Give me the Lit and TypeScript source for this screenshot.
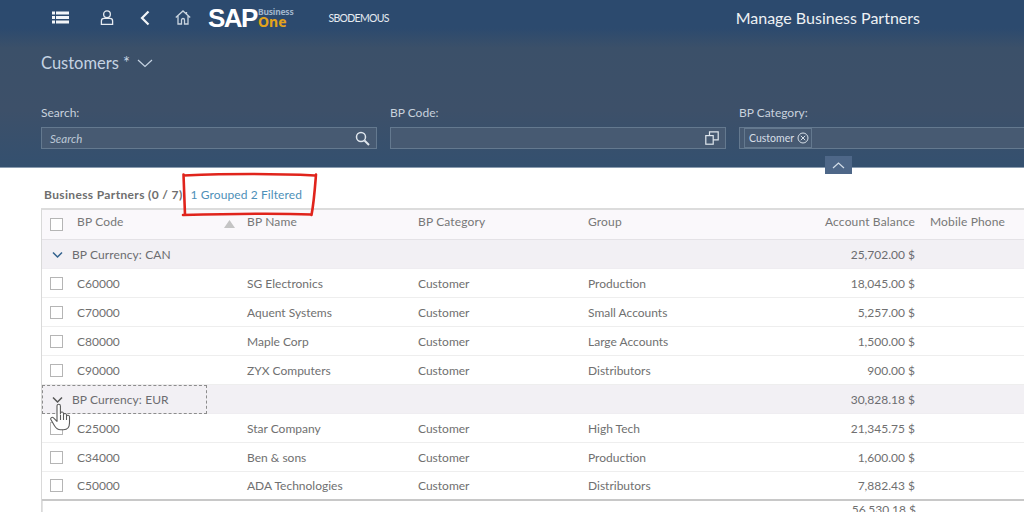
import { LitElement, html, css } from "lit";
import { customElement } from "lit/decorators.js";

type Row = { code: string; name: string; cat: string; group: string; bal: string };
const CAN: Row[] = [
  { code: "C60000", name: "SG Electronics", cat: "Customer", group: "Production", bal: "18,045.00 $" },
  { code: "C70000", name: "Aquent Systems", cat: "Customer", group: "Small Accounts", bal: "5,257.00 $" },
  { code: "C80000", name: "Maple Corp", cat: "Customer", group: "Large Accounts", bal: "1,500.00 $" },
  { code: "C90000", name: "ZYX Computers", cat: "Customer", group: "Distributors", bal: "900.00 $" },
];
const EUR: Row[] = [
  { code: "C25000", name: "Star Company", cat: "Customer", group: "High Tech", bal: "21,345.75 $" },
  { code: "C34000", name: "Ben & sons", cat: "Customer", group: "Production", bal: "1,600.00 $" },
  { code: "C50000", name: "ADA Technologies", cat: "Customer", group: "Distributors", bal: "7,882.43 $" },
];

@customElement("app-root")
export class AppRoot extends LitElement {
  static styles = css`
    :host { display: block; width: 1024px; height: 512px; overflow: hidden; position: relative; background: #fff; font-family: "Lato", "Noto Sans", sans-serif; color: #666; }
    .head { height: 168px; box-sizing: border-box; background: linear-gradient(#2c4a6e 0, #2c4a6e 28px, #3b5069 48px, #3d5069 110px, #34506f 166px); border-bottom: 1px solid #8a9cb0; position: relative; }
    .shell { height: 35px; display: flex; align-items: center; color: #eef2f6; }
    .ico { display: block; flex: none; }
    .i1 { margin-left: 52px; }
    .i2 { margin-left: 31px; }
    .i3 { margin-left: 26px; }
    .i4 { margin-left: 25px; }
    .logo { margin-left: 17px; display: flex; align-items: center; }
    .sap { font: 700 26px/1 "Liberation Sans", sans-serif; letter-spacing: -1.5px; color: #fff; }
    .lstack { display: flex; flex-direction: column; margin-left: 1px; margin-top: -2px; }
    .bus { font: 700 8.5px/9px "Noto Sans", sans-serif; color: #9fb4cb; letter-spacing: -0.2px; }
    .one { font: 700 14px/11px "Noto Sans", sans-serif; color: #e3a31b; }
    .tenant { margin-left: 35px; font-size: 10.5px; letter-spacing: -0.7px; color: #e6ebf1; }
    .title { margin-left: auto; margin-right: 104px; font-size: 16px; color: #eef1f4; }
    .variant { display: flex; align-items: center; gap: 7px; margin: 17px 0 0 41px; font-size: 16.5px; line-height: 22px; color: #c5d3e2; }
    .filters { display: grid; grid-template-columns: 336px 336px 336px; column-gap: 13px; margin: 31px 0 0 41px; }
    .lbl { font-size: 12px; line-height: 16px; color: #c8d2dd; margin-bottom: 6px; }
    .field { height: 22px; box-sizing: border-box; border: 1px solid #64798f; background: #475a72; display: flex; align-items: center; padding: 0 6px 0 8px; justify-content: space-between; }
    .ph { font-size: 11.5px; font-style: italic; color: #bcc8d6; }
    .token { display: flex; align-items: center; gap: 3px; height: 18px; border: 1px solid #64798f; margin-left: -4px; padding: 0 2px 0 4px; font-size: 10.5px; color: #d6dee7; }
    .collapse { position: absolute; left: 825px; top: 156px; width: 27px; height: 18px; background: #4e6788; display: flex; align-items: center; justify-content: center; }
    .bar { height: 40px; box-sizing: border-box; padding: 18px 0 0 44px; display: flex; gap: 8px; font-size: 12px; line-height: 17px; }
    .count { font-weight: 700; color: #6e6e6e; letter-spacing: 0.36px; }
    .link { color: #4d8fb8; letter-spacing: 0.1px; }
    .table { margin-left: 41px; border-left: 1px solid #d9d9d9; border-top: 2px solid #dcdcdc; }
    .row { display: grid; grid-template-columns: 35px 170px 171px 170px 170px 157px 15px 1fr; align-items: center; height: 29px; box-sizing: border-box; border-bottom: 1px solid #eeeeee; font-size: 12px; color: #707070; background: #fff; }
    .hdr { height: 30px; background: #faf8fb; color: #777; border-bottom: 1px solid #e4e2e6; padding-bottom: 6px; letter-spacing: 0.15px; }
    .hdr .cb { margin-top: 5px; }
    .grp { background: #f2f0f4; border-bottom: 1px solid #efedf1; color: #6c6c70; }
    .grp .gl { grid-column: 1 / 6; display: flex; align-items: center; gap: 8px; padding-left: 9px; letter-spacing: 0.1px; }
    .right { text-align: right; }
    .cb { width: 13px; height: 13px; box-sizing: border-box; border: 1px solid #b5b5b5; background: #fff; margin-left: 8px; }
    .hname { position: relative; }
    .sort { position: absolute; left: -23px; top: 6px; }
    .last { border-bottom: 2px solid #c8c8c8; }
    .total { height: 20px; display: grid; grid-template-columns: 35px 170px 171px 170px 170px 157px; font-size: 12px; color: #707070; padding-top: 1px; border-left: 1px solid #e3e3e3; }
    .focus { position: absolute; left: 42px; top: 385px; width: 165px; height: 29px; box-sizing: border-box; border: 1px dashed #8d8d8d; pointer-events: none; }
    .hand { position: absolute; left: 50px; top: 403px; pointer-events: none; }
    .mark { position: absolute; left: 180px; top: 172px; pointer-events: none; }
  `;

  private row(r: Row, last = false) {
    return html`<div class="row ${last ? "last" : ""}">
      <div class="cb"></div><div>${r.code}</div><div>${r.name}</div><div>${r.cat}</div><div>${r.group}</div>
      <div class="right">${r.bal}</div>
    </div>`;
  }

  private group(label: string, bal: string, dark = false) {
    return html`<div class="row grp">
      <div class="gl">
        <svg class="ico" width="13" height="13" viewBox="0 0 13 13" fill="none" stroke="${dark ? "#555" : "#34638f"}" stroke-width="1.5"><path d="M2 4.5l4.5 4.5 4.5-4.5"/></svg>
        <span>${label}</span>
      </div>
      <div class="right">${bal}</div>
    </div>`;
  }

  render() {
    return html`
      <div class="head">
        <div class="shell">
          <svg class="ico i1" width="17" height="13" viewBox="0 0 17 13" fill="#f2f5f8"><rect x="0" y="0.5" width="3" height="3"/><rect x="4" y="0.5" width="13" height="3"/><rect x="0" y="5" width="3" height="3"/><rect x="4" y="5" width="13" height="3"/><rect x="0" y="9.5" width="3" height="3"/><rect x="4" y="9.5" width="13" height="3"/></svg>
          <svg class="ico i2" width="14" height="17" viewBox="0 0 15 17" fill="none" stroke="#e6ebf1" stroke-width="1.4"><circle cx="7.5" cy="5" r="3.6"/><path d="M1.5 15.8v-3.5c0-1.6 1.2-2.8 2.8-2.8h6.4c1.6 0 2.8 1.2 2.8 2.8v3.5z"/></svg>
          <svg class="ico i3" width="10" height="16" viewBox="0 0 10 16" fill="none" stroke="#f2f5f8" stroke-width="2.2"><path d="M8.5 1.5L2 8l6.5 6.5"/></svg>
          <svg class="ico i4" width="16" height="15" viewBox="0 0 16 15" fill="none" stroke="#c9d4df" stroke-width="1.3"><path d="M0.8 7.5L8 1l7.2 6.5M3 6v8h3.5v-4a1.5 1.5 0 013 0v4H13V6M11.5 2v2.5"/></svg>
          <div class="logo">
            <span class="sap">SAP</span>
            <div class="lstack"><span class="bus">Business</span><span class="one">One</span></div>
          </div>
          <span class="tenant">SBODEMOUS</span>
          <span class="title">Manage Business Partners</span>
        </div>
        <div class="variant">
          <span>Customers *</span>
          <svg class="ico" width="16" height="9" viewBox="0 0 16 9" fill="none" stroke="#c5d3e2" stroke-width="1.2"><path d="M1 1l7 6.5L15 1"/></svg>
        </div>
        <div class="filters">
          <div>
            <div class="lbl">Search:</div>
            <div class="field"><span class="ph">Search</span>
              <svg class="ico" width="15" height="15" viewBox="0 0 15 15" fill="none" stroke="#dfe6ed" stroke-width="1.5"><circle cx="6" cy="6" r="4.5"/><path d="M9.5 9.5l4.5 4.5" stroke-width="2"/></svg>
            </div>
          </div>
          <div>
            <div class="lbl">BP Code:</div>
            <div class="field"><span></span>
              <svg class="ico" width="14" height="14" viewBox="0 0 14 14" fill="none" stroke="#dfe6ed" stroke-width="1.2"><rect x="0.8" y="4.6" width="7.4" height="8.6"/><path d="M4.5 4.5V0.8h8.7v8H8.2"/></svg>
            </div>
          </div>
          <div>
            <div class="lbl">BP Category:</div>
            <div class="field"><span class="token">Customer
              <svg class="ico" width="12" height="12" viewBox="0 0 12 12" fill="none" stroke="#d6dee7" stroke-width="1"><circle cx="6" cy="6" r="5"/><path d="M3.8 3.8l4.4 4.4M8.2 3.8l-4.4 4.4"/></svg></span>
            </div>
          </div>
        </div>
        <div class="collapse">
          <svg class="ico" width="13" height="7" viewBox="0 0 13 7" fill="none" stroke="#d3dde8" stroke-width="1.2"><path d="M1 6l5.5-5L12 6"/></svg>
        </div>
      </div>
      <div class="bar"><span class="count">Business Partners (0 / 7)</span><span class="link">1 Grouped 2 Filtered</span></div>
      <div class="table">
        <div class="row hdr">
          <div class="cb"></div><div>BP Code</div>
          <div class="hname"><svg class="ico sort" width="11" height="8" viewBox="0 0 11 8" fill="#c4c4c4"><path d="M5.5 0L11 8H0z"/></svg>BP Name</div>
          <div>BP Category</div><div>Group</div><div class="right">Account Balance</div><div></div><div>Mobile Phone</div>
        </div>
        ${this.group("BP Currency: CAN", "25,702.00 $")}
        ${CAN.map((r) => this.row(r))}
        ${this.group("BP Currency: EUR", "30,828.18 $", true)}
        ${EUR.map((r, i) => this.row(r, i === EUR.length - 1))}
        <div class="total"><div></div><div></div><div></div><div></div><div></div><div class="right">56,530.18 $</div></div>
      </div>
      <div class="focus"></div>
      <svg class="hand" width="24" height="30" viewBox="0 0 24 30" fill="#fff" stroke="#5a5a5a" stroke-width="1.1" stroke-linejoin="round"><path d="M7 3c0-2.4 3.4-2.4 3.4 0v8l.1-1c.5-1.6 3-1.3 3 .5l0 1c.5-1.500 3-1.200 3 .5v1c.6-1.300 3-1 3 .8v6c0 4-2 7-6 7h-3c-3 0-4.500-1.500-6-4l-3.500-6c-1-2 1.200-3.200 2.500-2l3.500 3.500z"/><path d="M10.500 12v5M13.500 12v5M16.500 13v4"/></svg>
      <svg class="mark" width="140" height="46" viewBox="0 0 140 46" fill="none" stroke="#e0241c" stroke-width="2.6" stroke-linecap="round" stroke-linejoin="round"><path d="M3.5 3.500C40 2 95 1.500 135 3.500 M3.500 2.500L5 43 M3 43C40 42 95 41 131 42.500 M136 2.500C135 15 134 30 131.500 43"/></svg>
    `;
  }
}
